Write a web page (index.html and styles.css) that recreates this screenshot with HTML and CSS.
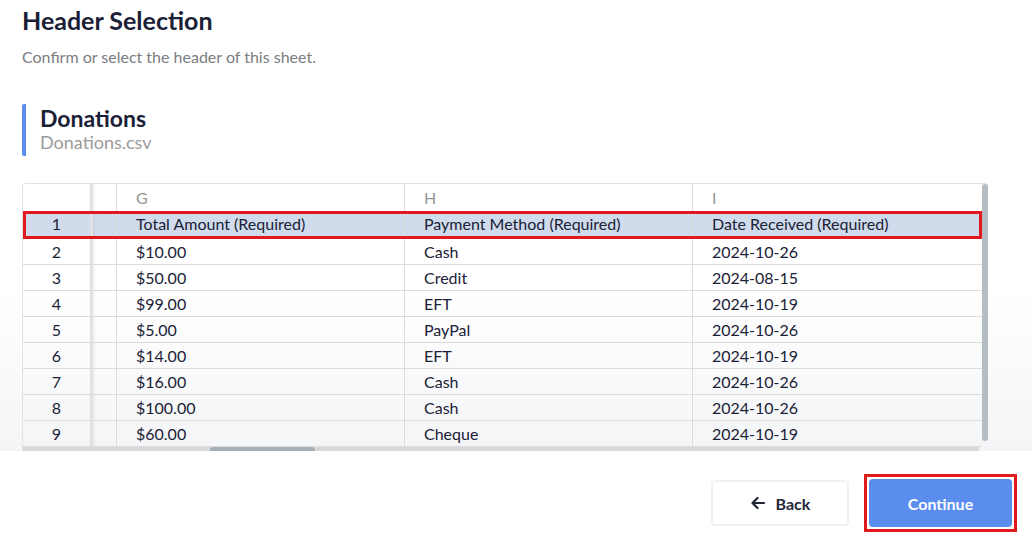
FILE: index.html
```html
<!DOCTYPE html>
<html lang="en">
<head>
    <meta charset="UTF-8">
    <title>Header Selection</title>
    <link rel="stylesheet" href="styles.css">
</head>
<body>
    <div class="content">
        <h1 class="title">Header Selection</h1>
        <p class="subtitle">Confirm or select the header of this sheet.</p>

        <div class="sheet-name">
            <div class="sheet-title">Donations</div>
            <div class="sheet-file">Donations.csv</div>
        </div>

        <div class="grid-wrap">
            <div class="grid">
                <div class="row head">
                    <div class="cell num"></div>
                    <div class="cell frozen"></div>
                    <div class="cell">G</div>
                    <div class="cell">H</div>
                    <div class="cell">I</div>
                </div>
                <div class="row selected">
                    <div class="cell num">1</div>
                    <div class="cell frozen"></div>
                    <div class="cell">Total Amount (Required)</div>
                    <div class="cell">Payment Method (Required)</div>
                    <div class="cell">Date Received (Required)</div>
                </div>
                <div class="row">
                    <div class="cell num">2</div>
                    <div class="cell frozen"></div>
                    <div class="cell">$10.00</div>
                    <div class="cell">Cash</div>
                    <div class="cell">2024-10-26</div>
                </div>
                <div class="row">
                    <div class="cell num">3</div>
                    <div class="cell frozen"></div>
                    <div class="cell">$50.00</div>
                    <div class="cell">Credit</div>
                    <div class="cell">2024-08-15</div>
                </div>
                <div class="row">
                    <div class="cell num">4</div>
                    <div class="cell frozen"></div>
                    <div class="cell">$99.00</div>
                    <div class="cell">EFT</div>
                    <div class="cell">2024-10-19</div>
                </div>
                <div class="row">
                    <div class="cell num">5</div>
                    <div class="cell frozen"></div>
                    <div class="cell">$5.00</div>
                    <div class="cell">PayPal</div>
                    <div class="cell">2024-10-26</div>
                </div>
                <div class="row">
                    <div class="cell num">6</div>
                    <div class="cell frozen"></div>
                    <div class="cell">$14.00</div>
                    <div class="cell">EFT</div>
                    <div class="cell">2024-10-19</div>
                </div>
                <div class="row">
                    <div class="cell num">7</div>
                    <div class="cell frozen"></div>
                    <div class="cell">$16.00</div>
                    <div class="cell">Cash</div>
                    <div class="cell">2024-10-26</div>
                </div>
                <div class="row">
                    <div class="cell num">8</div>
                    <div class="cell frozen"></div>
                    <div class="cell">$100.00</div>
                    <div class="cell">Cash</div>
                    <div class="cell">2024-10-26</div>
                </div>
                <div class="row">
                    <div class="cell num">9</div>
                    <div class="cell frozen"></div>
                    <div class="cell">$60.00</div>
                    <div class="cell">Cheque</div>
                    <div class="cell">2024-10-19</div>
                </div>
                <div class="hscroll"><div class="hthumb"></div></div>
            </div>
            <div class="vscroll"></div>
        </div>
    </div>

    <div class="footer">
        <button class="btn back">
            <svg width="16" height="16" viewBox="0 0 16 16" fill="none" stroke="#1f2638" stroke-width="2.2" stroke-linecap="round" stroke-linejoin="round">
                <path d="M14 8H2.5M7.5 3L2.5 8l5 5"/>
            </svg>
            Back
        </button>
        <div class="highlight">
            <button class="btn continue">Continue</button>
        </div>
    </div>
</body>
</html>
```

FILE: styles.css
```css
* {
    box-sizing: border-box;
}
body {
    margin: 0;
    padding: 0;
    font-family: Lato, "Open Sans", sans-serif;
    color: #1f2638;
    background: #fff;
}
.content {
    height: 451px;
    overflow: hidden;
    padding: 0 22px;
    background: linear-gradient(to bottom, #fff 0, #fff 290px, #f4f5f7 451px);
}
.title {
    margin: 0;
    padding-top: 4px;
    font-size: 25px;
    line-height: 32px;
    font-weight: bold;
    color: #1a2136;
}
.subtitle {
    margin: 11px 0 0;
    font-size: 16px;
    line-height: 20px;
    color: #7b7d82;
}
.sheet-name {
    margin-top: 37px;
    border-left: 4px solid #5b8def;
    border-radius: 2px;
    padding-left: 14px;
    height: 52px;
}
.sheet-title {
    font-size: 23px;
    line-height: 28px;
    font-weight: bold;
    color: #1a2136;
}
.sheet-file {
    font-size: 18px;
    line-height: 20px;
    color: #9b9b9b;
}
.grid-wrap {
    margin-top: 27px;
    display: flex;
    width: 966px;
    border-top: 1px solid #e2e2e2;
    border-left: 1px solid #e2e2e2;
    border-radius: 4px 4px 0 0;
}
.grid {
    width: 959px;
}
.row {
    display: grid;
    grid-template-columns: 68px 26px 288px 288px 289px;
    height: 26px;
    border-bottom: 1px solid #dcdcdc;
    font-size: 16px;
    line-height: 25px;
    color: #1a2136;
}
.row.head {
    height: 27px;
    line-height: 28px;
    color: #959595;
    border-bottom: none;
}
.row.selected {
    height: 28px;
    line-height: 26px;
    background: #d0dbec;
    outline: 3px solid #e0191f;
    outline-offset: -3px;
}
.cell {
    padding-left: 19px;
    border-right: 1px solid #dcdcdc;
    white-space: nowrap;
    overflow: hidden;
}
.cell:last-child {
    border-right: none;
}
.cell.num {
    padding: 0;
    text-align: center;
}
.cell.frozen {
    padding: 0;
    border-left: 2px solid #e4e4e4;
    box-shadow: inset 3px 0 3px -2px rgba(0, 0, 0, 0.08);
}
.hscroll {
    height: 6px;
    background: #d6d9dc;
    border-radius: 0 0 3px 0;
    width: 956px;
}
.hthumb {
    margin-left: 187px;
    width: 105px;
    height: 6px;
    background: #a9b0b5;
    border-radius: 3px 3px 0 0;
}
.vscroll {
    width: 7px;
    height: 257px;
    background: #b5bcc2;
    border-radius: 4px;
}
.footer {
    display: flex;
    justify-content: flex-end;
    align-items: center;
    gap: 15px;
    padding: 23px 15px 0 0;
}
.btn {
    font-family: Lato, "Open Sans", sans-serif;
    font-size: 16px;
    font-weight: bold;
    border-radius: 4px;
    cursor: pointer;
}
.back {
    width: 138px;
    height: 46px;
    background: #fff;
    border: 2px solid #eef1f6;
    color: #1f2638;
    display: flex;
    align-items: center;
    justify-content: center;
    gap: 10px;
}
.highlight {
    border: 3px solid #e0191f;
    padding: 2px;
}
.continue {
    display: block;
    width: 143px;
    height: 48px;
    background: #5b8def;
    border: none;
    color: #fff;
}
```
